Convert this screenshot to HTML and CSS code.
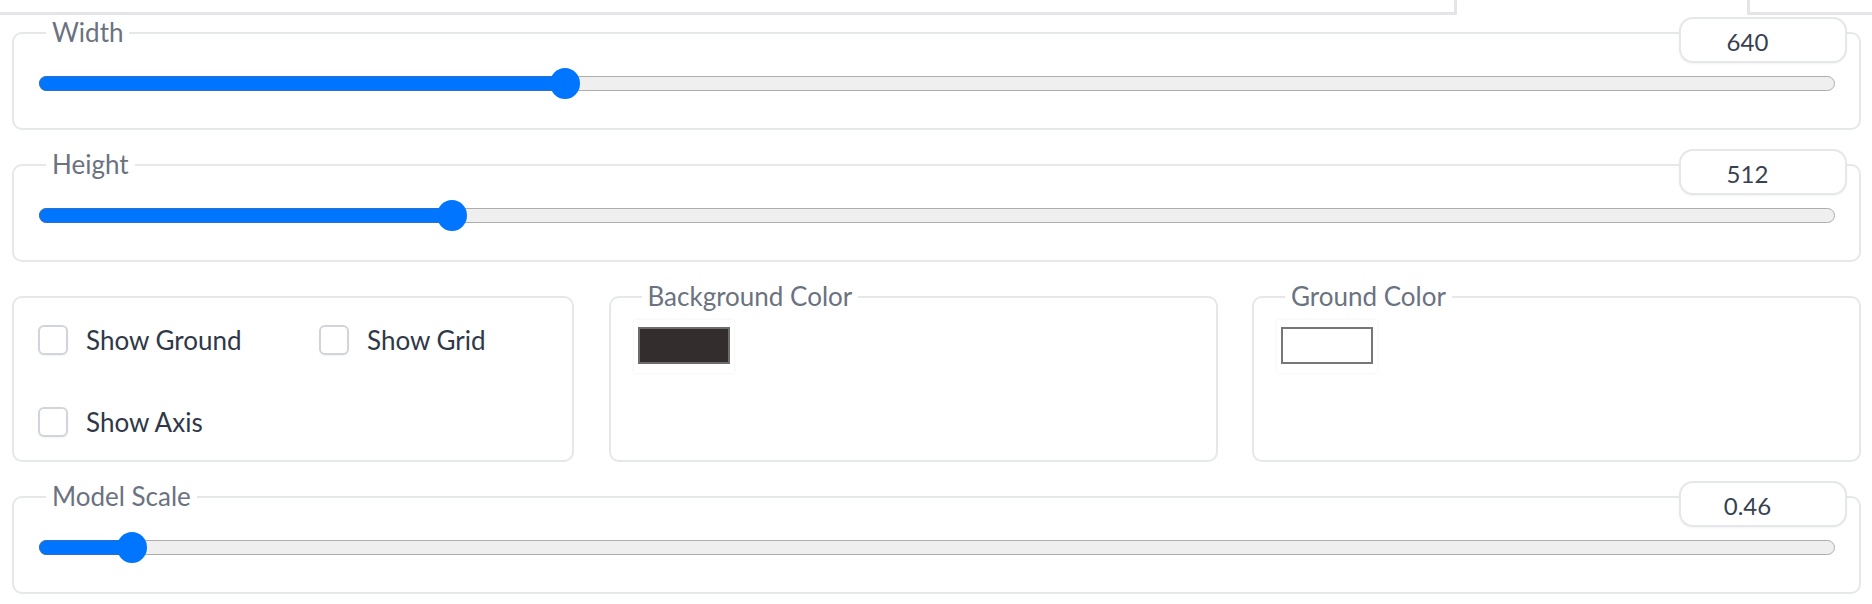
FILE: index.html
```html
<!DOCTYPE html>
<html>
<head>
<meta charset="utf-8">
<link rel="stylesheet" href="styles.css">
</head>
<body>
<div class="topbar">
  <div class="tab-left"></div>
  <div class="tab-gap"></div>
  <div class="tab-right"></div>
</div>
<div class="content">
  <div class="block">
    <div class="head"><span class="label">Width</span><div class="num">640</div></div>
    <div class="track"><div class="fill" style="width:29.34%"><div class="thumb"></div></div></div>
  </div>
  <div class="block">
    <div class="head"><span class="label">Height</span><div class="num">512</div></div>
    <div class="track"><div class="fill" style="width:23.05%"><div class="thumb"></div></div></div>
  </div>
  <div class="row">
    <div class="card checks">
      <div class="check"><span class="box"></span><span class="ctext">Show Ground</span></div>
      <div class="check"><span class="box"></span><span class="ctext">Show Grid</span></div>
      <div class="check"><span class="box"></span><span class="ctext">Show Axis</span></div>
    </div>
    <div class="card color">
      <span class="label">Background Color</span>
      <div class="swatch-wrap"><div class="swatch dark"></div></div>
    </div>
    <div class="card color">
      <span class="label">Ground Color</span>
      <div class="swatch-wrap"><div class="swatch light"></div></div>
    </div>
  </div>
  <div class="block">
    <div class="head"><span class="label">Model Scale</span><div class="num">0.46</div></div>
    <div class="track"><div class="fill" style="width:5.23%"><div class="thumb"></div></div></div>
  </div>
</div>
</body>
</html>
```

FILE: styles.css
```css
* { box-sizing: border-box; }
html, body { margin: 0; padding: 0; background: #ffffff; }
body {
  font-family: Lato, "Noto Sans", sans-serif;
  width: 1872px;
  height: 604px;
  overflow: hidden;
}
.topbar {
  display: flex;
  height: 15px;
}
.tab-left {
  flex: 0 0 1457px;
  border-right: 3px solid #e4e4e9;
  border-bottom: 3px solid #e4e4e9;
}
.tab-gap { flex: 0 0 290px; }
.tab-right {
  flex: 1;
  border-left: 3px solid #e4e4e9;
  border-bottom: 3px solid #e4e4e9;
}
.content {
  display: flex;
  flex-direction: column;
  gap: 34px;
  padding: 17px 11px 0 12px;
}
.block {
  border: 2px solid #e5e7eb;
  border-radius: 10px;
  padding: 0 24px 37px 25px;
}
.head {
  display: flex;
  justify-content: space-between;
  align-items: flex-start;
  margin-top: -17px;
}
.label {
  font-size: 26px;
  line-height: 30px;
  color: #6b7280;
  background: #ffffff;
  padding: 0 6px;
}
.head .label {
  margin-left: 7px;
  margin-top: 0px;
}
.num {
  width: 168px;
  height: 46px;
  margin-right: -12px;
  border: 2px solid #e5e7eb;
  border-radius: 14px;
  background: #ffffff;
  box-shadow: 0 1px 2px rgba(0, 0, 0, 0.05);
  display: flex;
  align-items: center;
  justify-content: center;
  padding: 3px 31px 0 0;
  font-size: 24px;
  color: #374151;
}
.track {
  margin-top: 13px;
  height: 15px;
  border-radius: 8px;
  background: #efefef;
  border: 1.5px solid #adadad;
  display: flex;
}
.fill {
  height: 15px;
  margin: -1.5px 0 0 -1.5px;
  border-radius: 8px 0 0 8px;
  background: #0075ff;
  border: 1px solid #2c6fc6;
  border-right: none;
  display: flex;
  justify-content: flex-end;
  align-items: center;
}
.thumb {
  flex: none;
  width: 30px;
  height: 31px;
  margin-right: -15px;
  border-radius: 50%;
  background: #0075ff;
}
.row {
  display: grid;
  grid-template-columns: 562px 1fr 1fr;
  column-gap: 34.5px;
}
.card {
  border: 2px solid #e5e7eb;
  border-radius: 10px;
  background: #ffffff;
}
.checks {
  display: grid;
  grid-template-columns: 281px 1fr;
  row-gap: 52px;
  align-content: start;
  padding: 27px 0 23px 24px;
}
.check {
  display: flex;
  align-items: center;
  gap: 18px;
  height: 30px;
}
.box {
  width: 30px;
  height: 30px;
  flex: none;
  border: 2px solid #d1d5db;
  border-radius: 6px;
  background: #ffffff;
  box-shadow: 0 1px 2px rgba(0, 0, 0, 0.05);
}
.ctext {
  font-size: 26px;
  color: #2f3848;
  line-height: 30px;
}
.color {
  display: flex;
  flex-direction: column;
  align-items: flex-start;
  padding-left: 23px;
}
.color .label {
  margin-top: -17px;
  margin-left: 8px;
}
.swatch-wrap {
  margin-top: 9px;
  padding: 7px 4px 9px;
  background: #ffffff;
  box-shadow: 0 0 3px rgba(0, 0, 0, 0.07);
}
.swatch {
  width: 92px;
  height: 37px;
  border: 2px solid #6d6d6d;
}
.swatch.dark { background: #342d2d; }
.swatch.light { background: #ffffff; border-color: #777777; }
```
